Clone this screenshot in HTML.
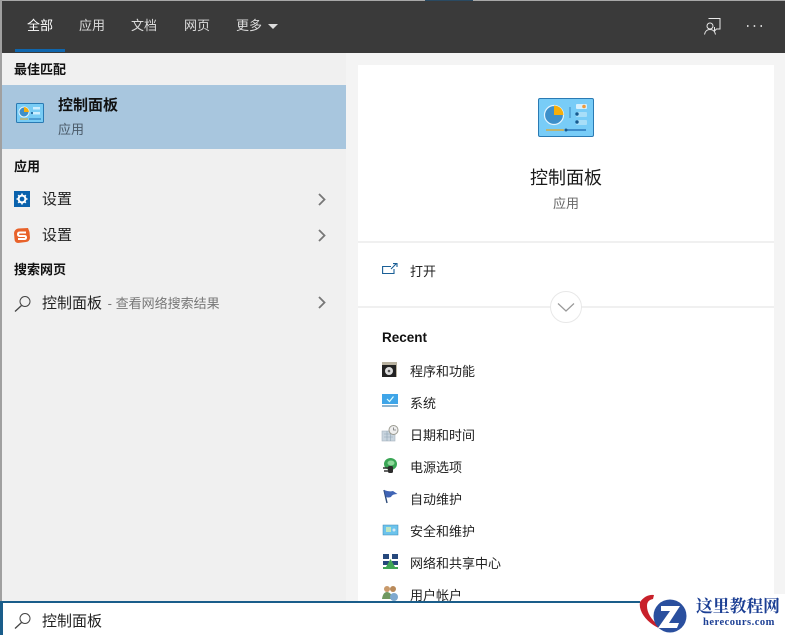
<!DOCTYPE html>
<html><head><meta charset="utf-8">
<style>
html,body{margin:0;padding:0}
body{width:785px;height:635px;overflow:hidden;position:relative;background:#f4f4f4;font-family:"Liberation Sans","Noto Sans CJK SC",sans-serif;color:#1a1a1a}
.a{position:absolute;white-space:nowrap;line-height:1}
.t{font-size:13px;color:#dcdcdc}
.h{font-size:13px;font-weight:bold;color:#111}
.r{font-size:13px;color:#222}
svg{position:absolute;overflow:visible}
</style></head><body>
<div class="a" style="left:0;top:0;width:785px;height:1px;background:#a8a8a8"></div>
<div class="a" style="left:425px;top:0;width:48px;height:2px;background:#2a4a62"></div>
<div class="a" style="left:2px;top:1px;width:783px;height:52px;background:#3a3a3a"></div>
<div class="a" style="left:0;top:0;width:2px;height:635px;background:#a0a0a0"></div>
<div class="a" style="left:2px;top:53px;width:344px;height:548px;background:#f0f0f0"></div>
<div class="a" style="left:15px;top:49px;width:50px;height:3px;background:#0f66ad"></div>

<div class="a t" style="left:27px;top:19px;color:#fff">全部</div>
<div class="a t" style="left:79px;top:19px">应用</div>
<div class="a t" style="left:131px;top:19px">文档</div>
<div class="a t" style="left:184px;top:19px">网页</div>
<div class="a t" style="left:236px;top:19px">更多</div>
<svg style="left:268px;top:24px" width="11" height="6"><path d="M0 0H10L5 5Z" fill="#ddd"/></svg>

<svg style="left:704px;top:18px" width="17" height="17" fill="none" stroke="#e8e8e8" stroke-width="1"><path d="M4.500 .5H16V11H12.500L10.500 13V9"/><circle cx="6" cy="8" r="3" fill="#3a3a3a"/><path d="M.5 16.500C1 13.500 3 11.500 6 11.500S11 13.500 11.500 16.500"/></svg>
<svg style="left:747px;top:25px" width="16" height="3" fill="#d0d0d0"><rect x="0" y="0" width="1.500" height="2"/><rect x="6.700" y="0" width="1.500" height="2"/><rect x="13.500" y="0" width="1.500" height="2"/></svg>

<div class="a h" style="left:14px;top:63px">最佳匹配</div>
<div class="a" style="left:2px;top:85px;width:344px;height:64px;background:#a8c6de"></div>
<svg style="left:16px;top:103px" width="28" height="20"><rect x=".5" y=".5" width="27" height="19" rx="1" fill="#78ccf5" stroke="#2a7ab3"/><circle cx="8" cy="9" r="5" fill="#3f8fc9" stroke="#e4f5ff"/><path d="M8 9V4A5 5 0 0 1 13 9Z" fill="#f6ae0e"/><rect x="17" y="4" width="7" height="2.500" fill="#cdeeff"/><rect x="17" y="9" width="7" height="2.500" fill="#cdeeff"/><circle cx="16" cy="10" r="1" fill="#15598f"/><path d="M4 16H12" stroke="#e6a520"/><path d="M13 16H25" stroke="#1f6fb5"/></svg>
<div class="a" style="left:58px;top:98px;font-size:15px;font-weight:bold;color:#111">控制面板</div>
<div class="a" style="left:58px;top:123px;font-size:13px;color:#4a5a68">应用</div>

<div class="a h" style="left:14px;top:160px">应用</div>
<svg style="left:14px;top:191px" width="16" height="16"><rect width="16" height="16" fill="#0a62ad"/><circle cx="8" cy="8" r="3.400" fill="none" stroke="#fff" stroke-width="2"/><path d="M8 2.500V4.500M8 11.500V13.500M2.500 8H4.500M11.500 8H13.500M4.200 4.200L5.500 5.500M11.800 4.200L10.500 5.500M4.200 11.800L5.500 10.500M11.800 11.800L10.500 10.500" stroke="#fff" stroke-width="1.600"/></svg>
<div class="a" style="left:42px;top:192px;font-size:15px;color:#222">设置</div>
<svg style="left:318px;top:193px" width="8" height="13" fill="none" stroke="#777" stroke-width="1.800"><path d="M1 1L6.500 6.500L1 12"/></svg>

<svg style="left:14px;top:228px" width="16" height="15"><path d="M4 .5L14 0L15.500 4L16 10Q15.500 13.500 12 14L4 15Q.5 14.500 .5 11L0 5Q.5 1.500 4 .5Z" fill="#e8622a"/><path d="M12 4.500H6Q4 4.500 4 6.200T6 8H10.500Q12 8 12 9.500T10.500 11H4" fill="none" stroke="#fff" stroke-width="2"/></svg>
<div class="a" style="left:42px;top:228px;font-size:15px;color:#222">设置</div>
<svg style="left:318px;top:229px" width="8" height="13" fill="none" stroke="#777" stroke-width="1.800"><path d="M1 1L6.500 6.500L1 12"/></svg>

<div class="a h" style="left:14px;top:263px">搜索网页</div>
<svg style="left:14px;top:296px" width="17" height="16" fill="none" stroke="#444" stroke-width="1"><circle cx="11" cy="5.500" r="5"/><path d="M7.500 9.500L1 15.500" stroke-width="1.300"/></svg>
<div class="a" style="left:42px;top:296px;font-size:15px;color:#222">控制面板<span style="font-size:13px;color:#777;margin-left:2px"> - 查看网络搜索结果</span></div>
<svg style="left:318px;top:296px" width="8" height="13" fill="none" stroke="#777" stroke-width="1.800"><path d="M1 1L6.500 6.500L1 12"/></svg>

<div class="a" style="left:358px;top:65px;width:416px;height:536px;background:#fff"></div>
<svg style="left:538px;top:98px" width="56" height="39"><rect x=".5" y=".5" width="55" height="38" rx="1.500" fill="#78ccf7" stroke="#2a7ab3"/><circle cx="16" cy="17" r="9.500" fill="#3d8fca" stroke="#e4f5ff" stroke-width="1.200"/><path d="M16 17V7.500A9.500 9.500 0 0 1 25.500 17Z" fill="#f7ae0a"/><path d="M32 9V20" stroke="#3c89c1"/><rect x="38" y="6" width="11" height="5" rx="1" fill="#d6f0fd"/><circle cx="46" cy="8.500" r="1.800" fill="#ee9a3c"/><rect x="38" y="14" width="11" height="5" rx="1" fill="#a8def8"/><circle cx="39" cy="16" r="1.700" fill="#15598f"/><rect x="38" y="22" width="11" height="5" rx="1" fill="#a8def8"/><circle cx="39" cy="24" r="1.700" fill="#15598f"/><path d="M8 32H26" stroke="#e6a520" stroke-width="1.300"/><path d="M28 32H48" stroke="#1a66b0" stroke-width="1.300"/><circle cx="28" cy="32" r="1.500" fill="#15598f"/></svg>
<div class="a" style="left:530px;top:169px;font-size:18px;color:#1a1a1a">控制面板</div>
<div class="a" style="left:553px;top:197px;font-size:13px;color:#666">应用</div>
<div class="a" style="left:358px;top:241px;width:416px;height:2px;background:#f0f0f0"></div>

<svg style="left:382px;top:263px" width="16" height="12" fill="none" stroke="#1a5f96" stroke-width="1.100"><path d="M9 3.500H.6V10.500H12V6"/><path d="M9 6L14 1M11 .6H15V4"/></svg>
<div class="a r" style="left:410px;top:265px;font-size:13px">打开</div>
<div class="a" style="left:358px;top:306px;width:416px;height:2px;background:#f0f0f0"></div>
<svg style="left:550px;top:291px" width="32" height="32"><circle cx="16" cy="16" r="15.500" fill="#fff" stroke="#e8e8e8"/><path d="M8 12.500L16 20L24 12.500" fill="none" stroke="#999" stroke-width="1.200"/></svg>

<div class="a" style="left:382px;top:331px;font-size:13.500px;font-weight:bold;color:#111">Recent</div>

<svg style="left:382px;top:362px" width="15" height="15"><rect width="15" height="15" fill="#b9b2a0"/><rect y="3" width="14" height="12" fill="#222"/><circle cx="7" cy="9" r="4" fill="#ddd"/><circle cx="7" cy="9" r="1.300" fill="#555"/></svg>
<div class="a r" style="left:410px;top:365px">程序和功能</div>
<svg style="left:382px;top:394px" width="16" height="15"><rect width="16" height="10" fill="#3fa5e8"/><path d="M5 5L7.500 7.500L11.500 2.500" fill="none" stroke="#dff" stroke-width="1.200"/><rect y="11" width="16" height="2" fill="#8db4cf"/></svg>
<div class="a r" style="left:410px;top:397px">系统</div>
<svg style="left:382px;top:425px" width="17" height="16"><rect y="6" width="13" height="10" fill="#c8d4de" stroke="#a8b4bf" stroke-width=".6"/><path d="M2 9H11M2 12H11M5 6V16M8.500 6V16" stroke="#8fa4b4" stroke-width=".6"/><circle cx="11.500" cy="5" r="4.500" fill="#eee" stroke="#9a9a90"/><path d="M11.500 2.500V5H14" fill="none" stroke="#777" stroke-width=".8"/></svg>
<div class="a r" style="left:410px;top:429px">日期和时间</div>
<svg style="left:382px;top:457px" width="16" height="17"><ellipse cx="8.500" cy="7" rx="6.500" ry="6" fill="#3aa655"/><ellipse cx="9" cy="6" rx="3.500" ry="2.500" fill="#8ed89a"/><path d="M1 11H7M2 14H7" stroke="#333" stroke-width="1.500"/><rect x="6" y="9" width="5" height="7" rx="1.500" fill="#2c2c2c"/></svg>
<div class="a r" style="left:410px;top:461px">电源选项</div>
<svg style="left:382px;top:489px" width="16" height="15"><path d="M2 1L5 14" stroke="#2c4a78" stroke-width="1.400"/><path d="M2 1Q7 3 11 2L15.500 5Q10 5 9 8Q6 9 4 8Z" fill="#3f64b5"/></svg>
<div class="a r" style="left:410px;top:493px">自动维护</div>
<svg style="left:383px;top:525px" width="15" height="10"><rect width="15" height="10" fill="#6cc3ec" stroke="#3a88b5" stroke-width=".5"/><rect x="3" y="2" width="5" height="5" fill="#bfe6c2"/><circle cx="11" cy="5" r="1.500" fill="#d7e9f4"/></svg>
<div class="a r" style="left:410px;top:525px">安全和维护</div>
<svg style="left:383px;top:554px" width="15" height="15"><rect width="6" height="5" fill="#26487c"/><rect x="9" width="6" height="5" fill="#26487c"/><rect y="7" width="6" height="4" fill="#26487c"/><rect x="9" y="7" width="6" height="4" fill="#26487c"/><path d="M7.500 5L12 13H3Z" fill="#3fa654"/><rect y="13" width="15" height="2" fill="#3fa654"/></svg>
<div class="a r" style="left:410px;top:557px">网络和共享中心</div>
<svg style="left:382px;top:585px" width="17" height="16"><circle cx="5" cy="4" r="3" fill="#c99a6a"/><circle cx="11" cy="4" r="3" fill="#b98a5a"/><path d="M0 14Q1 7 5 7T11 14Z" fill="#6f9860"/><circle cx="12" cy="12" r="4" fill="#7fa9cf"/></svg>
<div class="a r" style="left:410px;top:589px">用户帐户</div>

<div class="a" style="left:0;top:601px;width:785px;height:34px;background:#fff"></div>
<div class="a" style="left:0;top:601px;width:785px;height:2px;background:#1a5d8a"></div>
<div class="a" style="left:0;top:601px;width:3px;height:34px;background:#1a5d8a"></div>
<svg style="left:14px;top:613px" width="17" height="16" fill="none" stroke="#444" stroke-width="1"><circle cx="11" cy="5.500" r="5"/><path d="M7.500 9.500L1 15.500" stroke-width="1.300"/></svg>
<div class="a" style="left:42px;top:614px;font-size:15px;color:#222">控制面板</div>

<div class="a" style="left:640px;top:594px;width:145px;height:41px;background:#fff"></div>
<svg style="left:638px;top:592px" width="60" height="43"><path d="M2 10Q8 2 16 3L15 7Q9 8 9 14Q9 24 21 34L25 38Q10 32 4 21Q1 15 2 10Z" fill="#c8202a"/><circle cx="32" cy="24" r="16.500" fill="#2a4f9e"/><path d="M23 14H42L31 31H41L39 36H20L32 19H23Z" fill="#fff"/></svg>
<div class="a" style="left:696px;top:597px;font-family:'Noto Serif CJK SC','Liberation Serif',serif;font-size:16.800px;font-weight:bold;color:#1c3f94">这里教程网</div>
<div class="a" style="left:703px;top:618px;font-family:'Liberation Serif',serif;font-size:10.500px;font-weight:bold;color:#1c3f94;letter-spacing:.5px">herecours.com</div>
</body></html>
